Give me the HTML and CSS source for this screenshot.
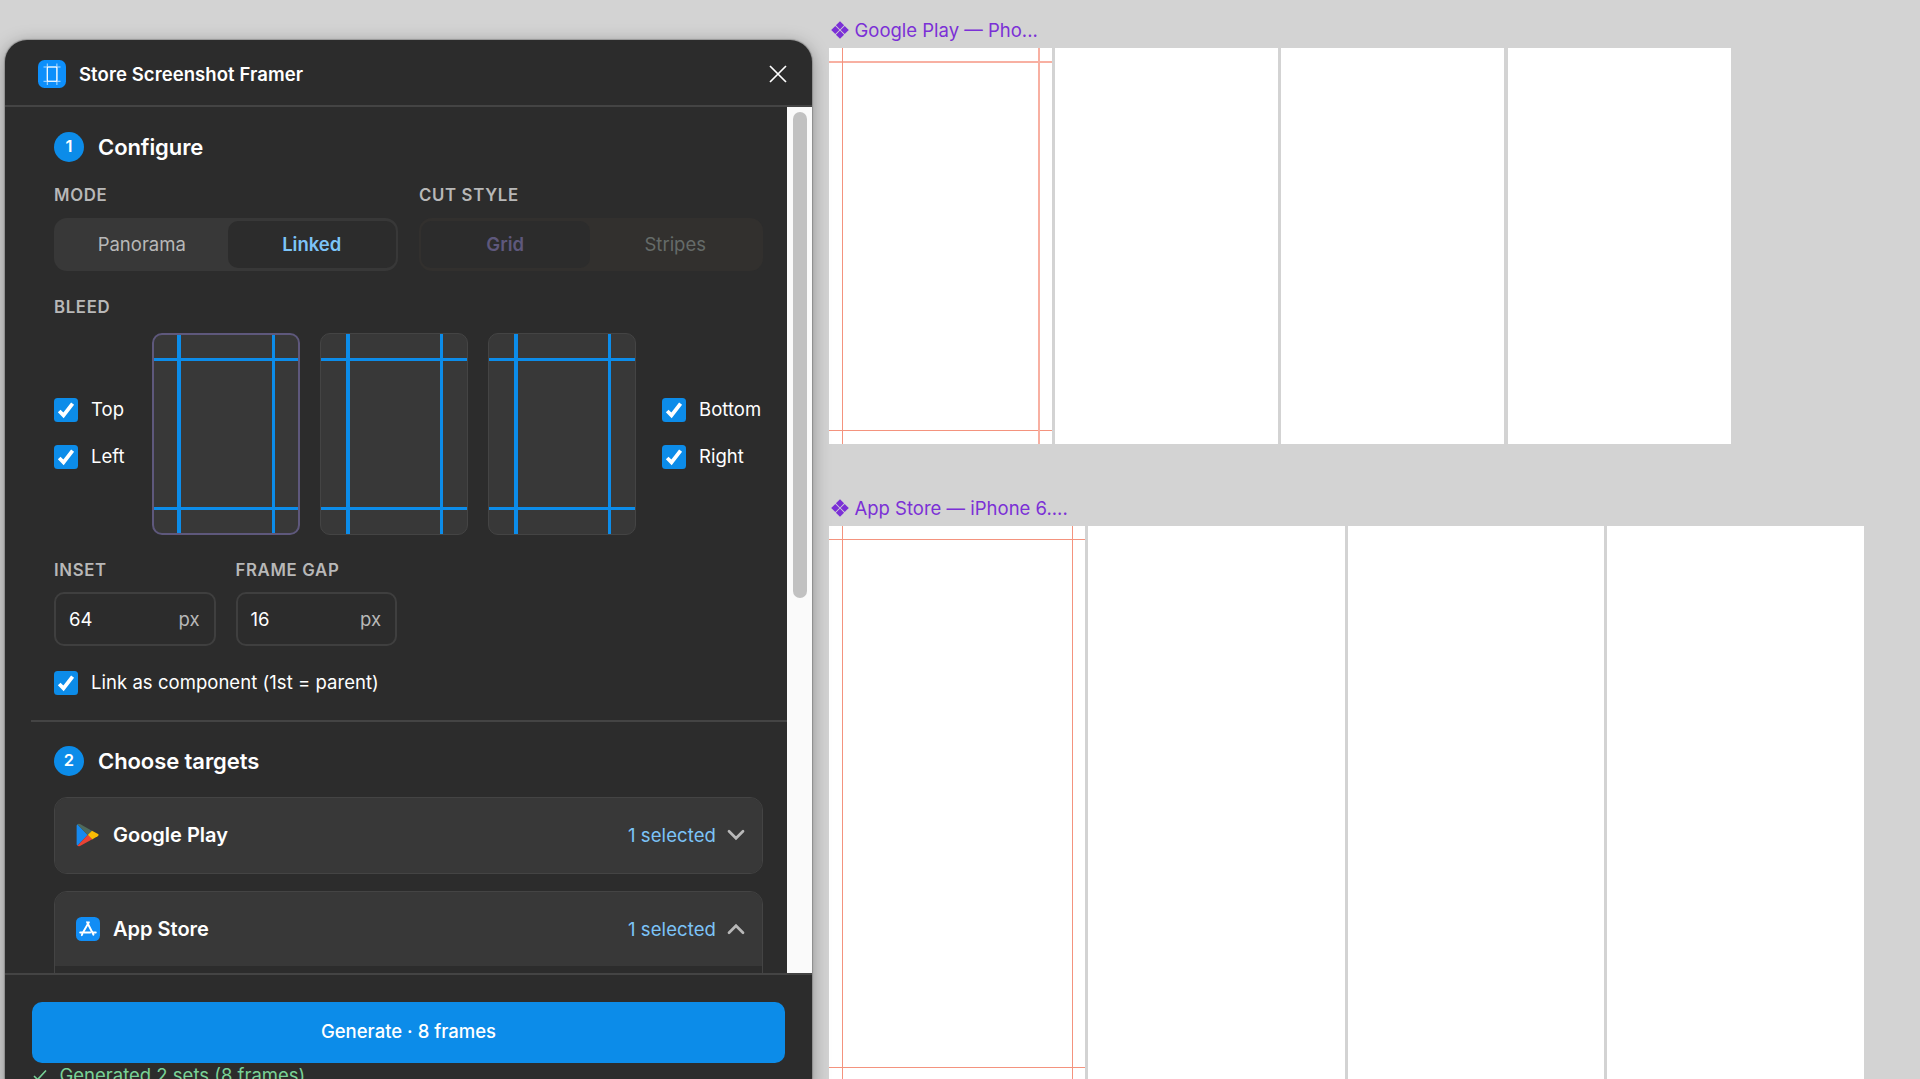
FILE: index.html
```html
<!DOCTYPE html>
<html lang="en">
<head>
    <meta charset="UTF-8">
    <meta name="viewport" content="width=device-width, initial-scale=1.0">
    <title>Store Screenshot Framer</title>
    <link rel="stylesheet" href="styles.css">
</head>
<body>
<!-- Canvas -->
<main class="canvas">
    <section class="set set-play">
        <h2 class="set-name">
            <svg class="component-icon" viewBox="0 0 18 18"><path d="M9 0.2l4.1 4.1L9 8.4 4.900 4.300zM9 9.600l4.100 4.100L9 17.800l-4.100-4.100zM4.300 4.900L8.400 9l-4.100 4.100L.2 9zM13.700 4.900L17.800 9l-4.100 4.100L9.600 9z"/></svg>
            <span>Google Play — Pho...</span>
        </h2>
        <div class="frames">
            <div class="frame">
                <i class="guide guide-top"></i><i class="guide guide-bottom"></i>
                <i class="guide guide-left"></i><i class="guide guide-right"></i>
            </div>
            <div class="frame"></div>
            <div class="frame"></div>
            <div class="frame"></div>
        </div>
    </section>

    <section class="set set-apple">
        <h2 class="set-name">
            <svg class="component-icon" viewBox="0 0 18 18"><path d="M9 0.2l4.1 4.1L9 8.4 4.900 4.300zM9 9.600l4.100 4.100L9 17.800l-4.100-4.100zM4.300 4.900L8.400 9l-4.100 4.100L.2 9zM13.700 4.900L17.800 9l-4.100 4.100L9.600 9z"/></svg>
            <span>App Store — iPhone 6....</span>
        </h2>
        <div class="frames">
            <div class="frame">
                <i class="guide guide-top"></i><i class="guide guide-bottom"></i>
                <i class="guide guide-left"></i><i class="guide guide-right"></i>
            </div>
            <div class="frame"></div>
            <div class="frame"></div>
            <div class="frame"></div>
        </div>
    </section>
</main>

<!-- Plugin window -->
<div class="plugin">
    <header class="plugin-header">
        <svg class="logo" viewBox="0 0 28 28">
            <rect width="28" height="28" rx="6.5" fill="#0d8ffb"/>
            <path d="M5.500 7h17M5.500 21.300h17M9.300 3.500v21.500M18.900 3.500v21.500" stroke="#b5dcff" stroke-width="1"/>
            <rect x="9.3" y="7" width="9.6" height="14.3" rx="1" fill="none" stroke="#fff" stroke-width="1.1"/>
        </svg>
        <h1>Store Screenshot Framer</h1>
        <svg class="close" viewBox="0 0 18 18"><path d="M1 1l16 16M17 1L1 17" stroke="#fff" stroke-width="1.7"/></svg>
    </header>

    <div class="plugin-body">
        <div class="content">
            <section class="section configure">
                <div class="step"><span class="step-number">1</span><h2>Configure</h2></div>

                <div class="modes">
                    <div class="field">
                        <div class="label">MODE</div>
                        <div class="segmented">
                            <button class="segment">Panorama</button>
                            <button class="segment active">Linked</button>
                        </div>
                    </div>
                    <div class="field">
                        <div class="label">CUT STYLE</div>
                        <div class="segmented disabled">
                            <button class="segment active">Grid</button>
                            <button class="segment">Stripes</button>
                        </div>
                    </div>
                </div>

                <div class="label label-bleed">BLEED</div>
                <div class="bleed">
                    <div class="checks">
                        <label class="check"><svg class="box" viewBox="0 0 24 24"><path d="M5.2 13l4.300 4.300L18.600 5.700"/></svg><span>Top</span></label>
                        <label class="check"><svg class="box" viewBox="0 0 24 24"><path d="M5.2 13l4.300 4.300L18.600 5.700"/></svg><span>Left</span></label>
                    </div>
                    <div class="previews">
                        <div class="preview selected"><i class="line top"></i><i class="line bottom"></i><i class="line left"></i><i class="line right"></i></div>
                        <div class="preview"><i class="line top"></i><i class="line bottom"></i><i class="line left"></i><i class="line right"></i></div>
                        <div class="preview"><i class="line top"></i><i class="line bottom"></i><i class="line left"></i><i class="line right"></i></div>
                    </div>
                    <div class="checks checks-right">
                        <label class="check"><svg class="box" viewBox="0 0 24 24"><path d="M5.2 13l4.300 4.300L18.600 5.700"/></svg><span>Bottom</span></label>
                        <label class="check"><svg class="box" viewBox="0 0 24 24"><path d="M5.2 13l4.300 4.300L18.600 5.700"/></svg><span>Right</span></label>
                    </div>
                </div>

                <div class="inputs">
                    <div>
                        <div class="label">INSET</div>
                        <div class="input"><span>64</span><span class="unit">px</span></div>
                    </div>
                    <div>
                        <div class="label">FRAME GAP</div>
                        <div class="input"><span>16</span><span class="unit">px</span></div>
                    </div>
                </div>

                <label class="check"><svg class="box" viewBox="0 0 24 24"><path d="M5.2 13l4.300 4.300L18.600 5.700"/></svg><span>Link as component (1st = parent)</span></label>
            </section>

            <section class="section targets">
                <div class="step"><span class="step-number">2</span><h2>Choose targets</h2></div>

                <div class="card">
                    <div class="card-header">
                        <svg class="store-icon" viewBox="0 0 24 24">
                            <path d="M1.4 1.2Q0.6 1.8 0.6 3v18q0 1.2.8 1.8L11.7 12z" fill="#1689ee"/>
                            <path d="M1.4 1.2Q2.6.3 4 1.1L16.3 8 11.7 12z" fill="#4f6b5c"/>
                            <path d="M16 7.8l5.600 3q2 1.200 0 2.400l-5.600 3.200L11.700 12z" fill="#fbbc04"/>
                            <path d="M1.4 22.8q1.2.9 2.6.1l12.3-6.7L11.7 12z" fill="#ea4335"/>
                        </svg>
                        <h3>Google Play</h3>
                        <span class="count">1 selected</span>
                        <svg class="chevron" viewBox="0 0 18 12"><path d="M2 2.300l7 7L16 2.300"/></svg>
                    </div>
                </div>

                <div class="card card-open">
                    <div class="card-header">
                        <svg class="store-icon" viewBox="0 0 24 24">
                            <rect width="24" height="24" rx="5.5" fill="#118df5"/>
                            <path d="M12.900 5.200L7.200 15M11.100 5.200l6.400 12.500M4.200 15.500h10M17 15.500h2.800M6.300 17.200l-.5 1" stroke="#fff" stroke-width="1.900" stroke-linecap="round" fill="none"/>
                        </svg>
                        <h3>App Store</h3>
                        <span class="count">1 selected</span>
                        <svg class="chevron" viewBox="0 0 18 12"><path d="M2 9.700l7-7L16 9.700"/></svg>
                    </div>
                </div>
            </section>
        </div>
        <div class="scrollbar"><div class="thumb"></div></div>
    </div>

    <footer class="plugin-footer">
        <button class="generate">Generate · 8 frames</button>
        <div class="status">
            <svg class="status-icon" viewBox="0 0 14 12"><path d="M1 7l3.6 3.6L13 1.5"/></svg>
            <span>Generated 2 sets (8 frames)</span>
        </div>
    </footer>
</div>
</body>
</html>
```

FILE: styles.css
```css
* {
    box-sizing: border-box;
}

body, h1, h2, h3 {
    margin: 0;
    padding: 0;
}

body {
    height: 1079px;
    overflow: hidden;
    background: #d3d3d3;
    font-family: Inter, "Liberation Sans", sans-serif;
    font-size: 18.5px;
    color: #fff;
}

button {
    border: none;
    padding: 0;
    font: inherit;
    color: inherit;
}

svg {
    display: block;
    flex-shrink: 0;
}

/* Canvas */
.canvas {
    height: 1079px;
    padding: 18px 0 0 829px;
    overflow: hidden;
}

.set-name {
    display: flex;
    align-items: center;
    gap: 6px;
    height: 24px;
    margin-bottom: 6px;
    padding-left: 1.5px;
    color: #7b30d6;
    font-size: 18.5px;
    font-weight: 400;
    white-space: nowrap;
}

.component-icon {
    width: 18px;
    height: 18px;
    fill: #7b30d6;
}

.frames {
    display: flex;
    gap: 3.2px;
}

.frame {
    position: relative;
    width: 223px;
    height: 396px;
    background: #fff;
}

.set-apple {
    margin-top: 52px;
}

.set-apple .frame {
    width: 256.3px;
    height: 554px;
}

.guide {
    position: absolute;
    background: #f8b0a2;
}

.guide-top, .guide-bottom {
    left: 0;
    right: 0;
    height: 2px;
}

.guide-left, .guide-right {
    top: 0;
    bottom: 0;
    width: 2px;
}

.guide-top { top: 13px; }
.guide-right { right: 12px; }

.guide-bottom {
    bottom: 13px;
    height: 1px;
    background: #f4937e;
}

.guide-left {
    left: 13px;
    width: 1px;
    background: #f4937e;
}

.set-apple .guide-top {
    height: 1px;
    background: #f4937e;
}

.set-apple .guide-right {
    width: 1px;
    background: #f4937e;
}

.set-apple .guide-bottom { bottom: 12px; }

/* Plugin window */
.plugin {
    position: absolute;
    top: 40px;
    left: 5px;
    display: flex;
    flex-direction: column;
    width: 807px;
    height: 1060px;
    overflow: hidden;
    border-radius: 22px;
    background: #2c2c2c;
    box-shadow: 0 0 1px 1px rgba(0, 0, 0, 0.2), 0 4px 18px rgba(0, 0, 0, 0.35);
}

.plugin-header {
    display: flex;
    align-items: center;
    height: 67px;
    padding: 2px 25px 0 33px;
    border-bottom: 2px solid #444;
    flex-shrink: 0;
}

.plugin-header h1 {
    margin-left: 13px;
    font-size: 18.5px;
    font-weight: 600;
    letter-spacing: 0.08px;
}

.logo {
    width: 28px;
    height: 28px;
}

.close {
    width: 18px;
    height: 18px;
    margin-left: auto;
}

.plugin-body {
    display: flex;
    height: 866px;
    flex-shrink: 0;
    overflow: hidden;
}

.content {
    width: 782px;
    padding-left: 26px;
}

.scrollbar {
    width: 25px;
    padding: 5px 5px 0 6px;
    background: #fafafa;
}

.thumb {
    width: 14px;
    height: 486px;
    border-radius: 7px;
    background: #c1c1c1;
}

/* Sections */
.section {
    padding: 25px 24px 25px 23px;
}

.targets {
    padding-top: 24px;
    border-top: 2px solid #444;
}

.step {
    display: flex;
    align-items: center;
    gap: 14px;
    height: 30px;
}

.step-number {
    width: 30px;
    height: 30px;
    border-radius: 50%;
    background: #0c8ce9;
    font-size: 16.5px;
    font-weight: 600;
    line-height: 29px;
    text-align: center;
}

.step h2 {
    font-size: 22px;
    font-weight: 600;
    letter-spacing: -0.08px;
}

.label {
    height: 20px;
    color: #b8b8b8;
    font-size: 16.8px;
    font-weight: 600;
    line-height: 20px;
    letter-spacing: 0.65px;
}

.modes {
    display: flex;
    gap: 21px;
    margin-top: 23px;
}

.segmented {
    display: flex;
    width: 344px;
    height: 53px;
    margin-top: 13px;
    padding: 3px 2px;
    border-radius: 13px;
    background: #383838;
}

.segment {
    flex: 1;
    padding-bottom: 2px;
    border-radius: 10px;
    background: none;
    color: #b8b8b8;
}

.segment.active {
    flex: none;
    width: 168.5px;
    background: #2c2c2c;
    color: #7cc4f8;
    font-weight: 600;
}

.segmented.disabled {
    background: #32302e;
}

.disabled .segment {
    color: #656b69;
}

.disabled .segment.active {
    color: #5e587c;
}

/* Bleed */
.label-bleed {
    margin-top: 26px;
}

.bleed {
    display: flex;
    align-items: center;
    height: 202px;
    margin-top: 16px;
}

.checks {
    display: flex;
    flex-direction: column;
    gap: 23px;
    width: 98px;
    padding-bottom: 2px;
}

.checks-right {
    margin-left: 26.5px;
}

.check {
    display: flex;
    align-items: center;
    gap: 13px;
    height: 24px;
    letter-spacing: 0.04px;
    white-space: nowrap;
}

.check span {
    padding-bottom: 2px;
}

.box {
    width: 24px;
    height: 24px;
    border-radius: 3.5px;
    background: #0c8ce9;
}

.box path {
    fill: none;
    stroke: #fff;
    stroke-width: 3.8;
}

.previews {
    display: flex;
    gap: 20.5px;
}

.preview {
    position: relative;
    width: 147.5px;
    height: 202px;
    overflow: hidden;
    border: 1px solid #444;
    border-radius: 10px;
    background: #383838;
}

.preview.selected {
    border: 2px solid #5e587c;
}

.line {
    position: absolute;
    background: #0c8ce9;
}

.line.top, .line.bottom {
    left: 0;
    right: 0;
    height: 3px;
}

.line.left, .line.right {
    top: 0;
    bottom: 0;
    width: 3px;
}

.line.left {
    width: 4px;
}

.line.top { top: 24px; }
.line.bottom { bottom: 24px; }
.line.left { left: 25px; }
.line.right { right: 24px; }
.selected .line.top { top: 23px; }
.selected .line.bottom { bottom: 23px; }
.selected .line.left { left: 23px; }
.selected .line.right { right: 22.5px; }

/* Inputs */
.inputs {
    display: flex;
    gap: 20px;
    margin: 25px 0;
}

.input {
    display: flex;
    align-items: center;
    justify-content: space-between;
    width: 161.5px;
    height: 54px;
    margin-top: 12px;
    padding: 0 14px 0 13px;
    border: 2px solid #3f3f3f;
    border-radius: 10px;
}

.unit {
    color: #b8b8b8;
}

/* Targets */
.card {
    height: 77px;
    margin-top: 21px;
    border: 1px solid #444;
    border-radius: 13px;
    overflow: hidden;
}

.card-open {
    height: 300px;
    margin-top: 17px;
}

.card-header {
    display: flex;
    align-items: center;
    height: 74px;
    padding: 0 17px 0 21px;
    background: #383838;
}

.card:not(.card-open) .card-header {
    height: 75px;
    padding-bottom: 1px;
}

.store-icon {
    width: 24px;
    height: 24px;
}

.card-header h3 {
    margin-left: 13px;
    font-size: 20px;
    font-weight: 600;
}

.count {
    margin-left: auto;
    letter-spacing: 0.1px;
}

.count {
    color: #7cc4f8;
}

.chevron {
    width: 18px;
    height: 12px;
    margin-left: 11px;
}

.chevron path {
    fill: none;
    stroke: #b8b8b8;
    stroke-width: 2.7;
    stroke-linecap: round;
}

/* Footer */
.plugin-footer {
    padding: 27px 27px 0;
    border-top: 2px solid #444;
}

.generate {
    display: block;
    width: 753px;
    height: 61px;
    padding-bottom: 3px;
    border-radius: 10px;
    background: #0c8ce9;
    font-weight: 500;
}

.status {
    display: flex;
    align-items: center;
    gap: 12.5px;
    height: 24px;
    padding-left: 1px;
    color: #79d297;
}

.status-icon {
    width: 14px;
    height: 12px;
}

.status-icon path {
    fill: none;
    stroke: #79d297;
    stroke-width: 1.6;
}
```
